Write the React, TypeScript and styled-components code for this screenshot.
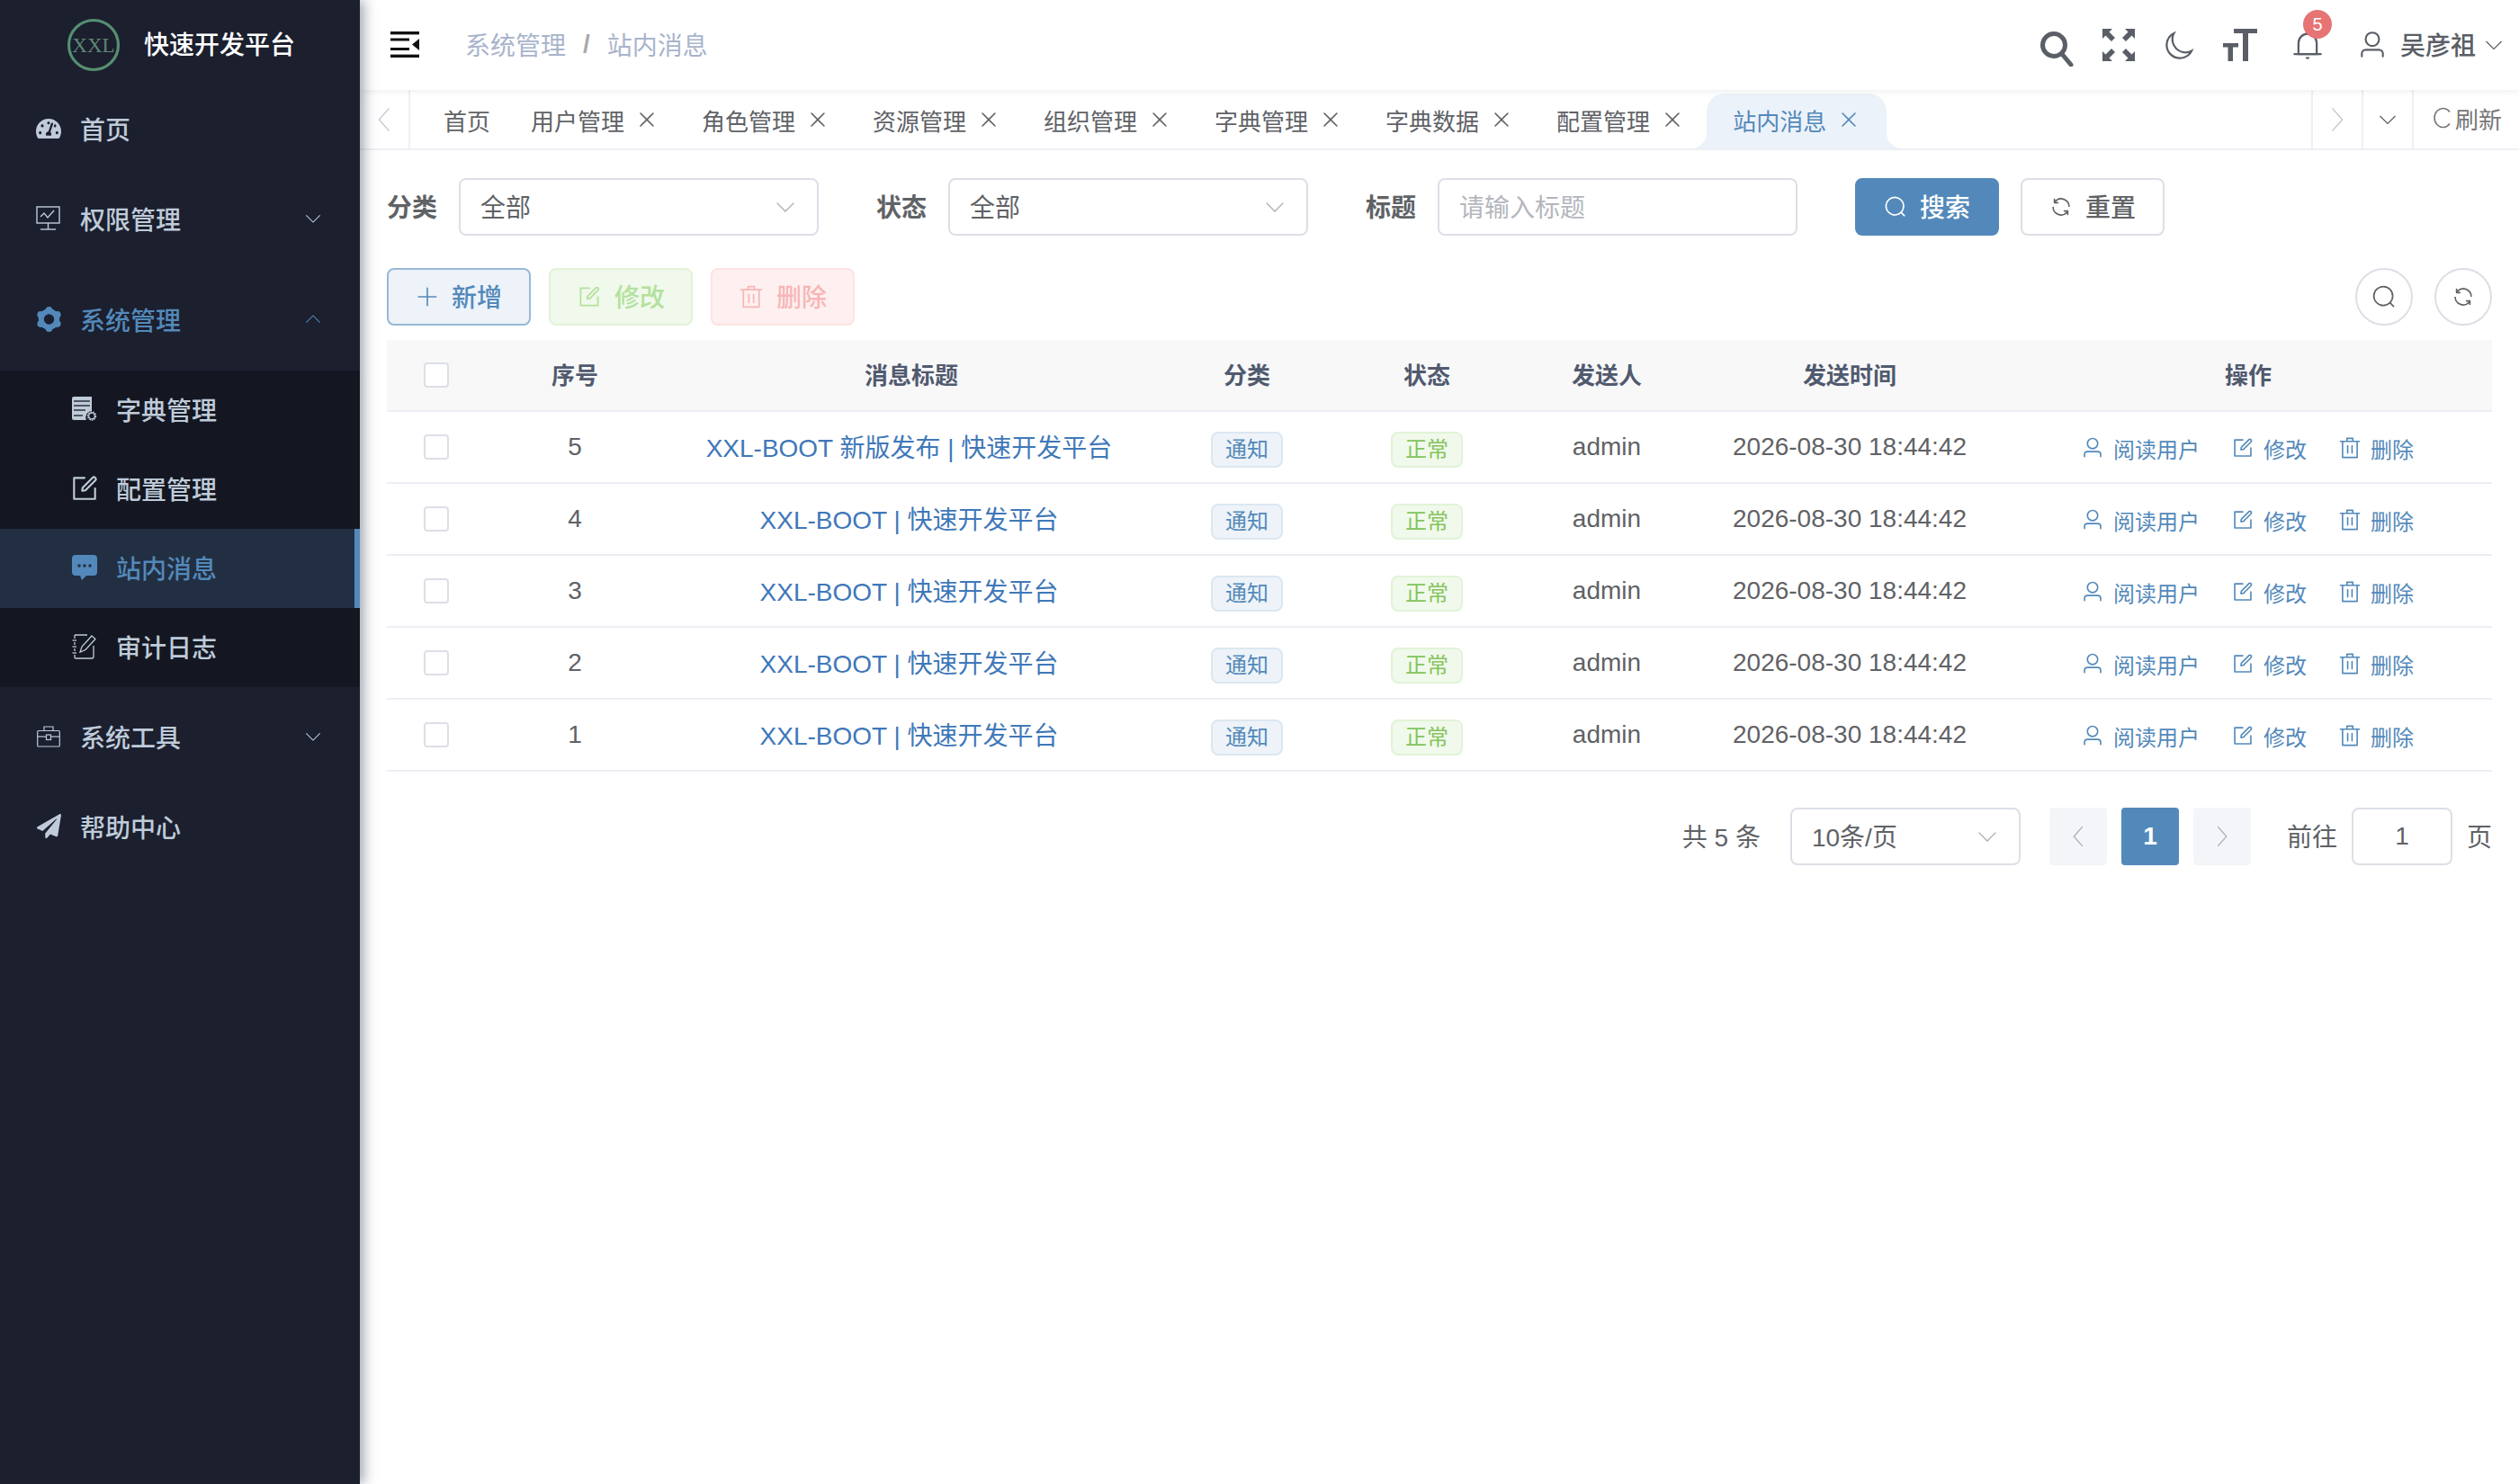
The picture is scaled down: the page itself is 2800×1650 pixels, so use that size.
import React from 'react';
import styled, {createGlobalStyle} from 'styled-components';
import {FaTachometerAlt, FaPaperPlane} from 'react-icons/fa';

const GlobalStyle = createGlobalStyle`
  html, body {
    margin: 0;
    padding: 0;
    background: #fff;
    font-family: "Liberation Sans", "Noto Sans CJK SC", sans-serif;
    color: #606266;
  }
  * { box-sizing: border-box; }
`;

const PRIMARY = '#5389ba';

/* ---------- icons ---------- */

const Ep = styled.svg.attrs({viewBox: '0 0 1024 1024', fill: 'currentColor'})<{$size: number}>`
  width: ${p => p.$size}px;
  height: ${p => p.$size}px;
  flex: none;
  display: block;
`;

type IconProps = {size: number};

const SearchIcon = ({size}: IconProps) => (
  <Ep $size={size}>
    <path d="m795.904 750.72 124.992 124.928a32 32 0 0 1-45.248 45.248L750.656 795.904a416 416 0 1 1 45.248-45.248zM480 832a352 352 0 1 0 0-704 352 352 0 0 0 0 704" />
  </Ep>
);
const RefreshIcon = ({size}: IconProps) => (
  <Ep $size={size}>
    <path d="M771.776 794.88A384 384 0 0 1 128 512h64a320 320 0 0 0 555.712 216.448H654.72a32 32 0 1 1 0-64h149.056a32 32 0 0 1 32 32v148.928a32 32 0 1 1-64 0v-50.56zM276.288 295.616h92.992a32 32 0 0 1 0 64H220.16a32 32 0 0 1-32-32V178.56a32 32 0 0 1 64 0v50.56A384 384 0 0 1 896.128 512h-64a320 320 0 0 0-555.776-216.384z" />
  </Ep>
);
const PlusIcon = ({size}: IconProps) => (
  <Ep $size={size}>
    <path d="M480 480V128a32 32 0 0 1 64 0v352h352a32 32 0 1 1 0 64H544v352a32 32 0 1 1-64 0V544H128a32 32 0 0 1 0-64z" />
  </Ep>
);
const EditIcon = ({size}: IconProps) => (
  <Ep $size={size}>
    <path d="M832 512a32 32 0 1 1 64 0v352a32 32 0 0 1-32 32H160a32 32 0 0 1-32-32V160a32 32 0 0 1 32-32h352a32 32 0 0 1 0 64H192v640h640z" />
    <path d="m469.952 554.24 52.8-7.552L847.104 222.4a32 32 0 1 0-45.248-45.248L477.44 501.44l-7.552 52.8zm422.4-422.4a96 96 0 0 1 0 135.808l-331.84 331.84a32 32 0 0 1-18.112 9.088L436.8 623.68a32 32 0 0 1-36.224-36.224l15.104-105.6a32 32 0 0 1 9.024-18.112l331.904-331.84a96 96 0 0 1 135.744 0z" />
  </Ep>
);
const DeleteIcon = ({size}: IconProps) => (
  <Ep $size={size}>
    <path d="M160 256H96a32 32 0 0 1 0-64h256V95.936a32 32 0 0 1 32-32h256a32 32 0 0 1 32 32V192h256a32 32 0 1 1 0 64h-64v672a32 32 0 0 1-32 32H192a32 32 0 0 1-32-32zm448-64v-64H416v64zM224 896h576V256H224zm192-128a32 32 0 0 1-32-32V416a32 32 0 0 1 64 0v320a32 32 0 0 1-32 32m192 0a32 32 0 0 1-32-32V416a32 32 0 0 1 64 0v320a32 32 0 0 1-32 32" />
  </Ep>
);
const UserIcon = ({size}: IconProps) => (
  <Ep $size={size}>
    <path d="M512 512a192 192 0 1 0 0-384 192 192 0 0 0 0 384m0 64a256 256 0 1 1 0-512 256 256 0 0 1 0 512m320 320v-96a96 96 0 0 0-96-96H288a96 96 0 0 0-96 96v96a32 32 0 1 1-64 0v-96a160 160 0 0 1 160-160h448a160 160 0 0 1 160 160v96a32 32 0 1 1-64 0" />
  </Ep>
);
const CloseIcon = ({size}: IconProps) => (
  <Ep $size={size}>
    <path d="M764.288 214.592 512 466.88 259.712 214.592a31.936 31.936 0 0 0-45.12 45.12L466.752 512 214.528 764.224a31.936 31.936 0 1 0 45.12 45.184L512 557.184l252.288 252.288a31.936 31.936 0 0 0 45.12-45.12L557.12 512.064l252.288-252.352a31.936 31.936 0 1 0-45.12-45.12z" />
  </Ep>
);
const MoonIcon = ({size}: IconProps) => (
  <Ep $size={size}>
    <path d="M240.448 240.448a384 384 0 1 0 559.424 525.696 448 448 0 0 1-542.016-542.08 390.592 390.592 0 0 0-17.408 16.384zm181.056 362.048a384 384 0 0 0 525.632 16.384A448 448 0 1 1 405.056 76.8a384 384 0 0 0 16.448 525.696" />
  </Ep>
);
const BellIcon = ({size}: IconProps) => (
  <Ep $size={size}>
    <path d="M512 64a64 64 0 0 1 64 64v64H448v-64a64 64 0 0 1 64-64" />
    <path d="M256 768h512V448a256 256 0 1 0-512 0zm256-640a320 320 0 0 1 320 320v384H192V448a320 320 0 0 1 320-320" />
    <path d="M96 768h832q32 0 32 32t-32 32H96q-32 0-32-32t32-32m352 128h128a64 64 0 0 1-128 0" />
  </Ep>
);

const Line = styled.svg.attrs({fill: 'none', stroke: 'currentColor'})<{$w: number; $h: number}>`
  width: ${p => p.$w}px;
  height: ${p => p.$h}px;
  flex: none;
  display: block;
`;

const ChevronDown = ({size}: IconProps) => (
  <Line $w={size} $h={size} viewBox="0 0 20 20" strokeWidth="1.2">
    <polyline points="1.5,6 10,14.5 18.5,6" />
  </Line>
);
const ChevronUp = ({size}: IconProps) => (
  <Line $w={size} $h={size} viewBox="0 0 20 20" strokeWidth="1.2">
    <polyline points="1.5,14 10,5.5 18.5,14" />
  </Line>
);
const ChevronLeft = ({size}: IconProps) => (
  <Line $w={size / 2} $h={size} viewBox="0 0 10 20" strokeWidth="1">
    <polyline points="9,1 1,10 9,19" />
  </Line>
);
const ChevronRight = ({size}: IconProps) => (
  <Line $w={size / 2} $h={size} viewBox="0 0 10 20" strokeWidth="1">
    <polyline points="1,1 9,10 1,19" />
  </Line>
);

const Hamburger = () => (
  <svg width="32" height="30" viewBox="0 0 32 30" fill="#111">
    <rect x="0" y="0" width="32" height="3.4" />
    <rect x="0" y="7.5" width="21" height="3" />
    <rect x="0" y="18" width="21" height="3" />
    <rect x="0" y="25.6" width="32" height="3.4" />
    <polygon points="32,8 24,14.5 32,21" />
  </svg>
);

const SearchGlyph = styled(Line)`
  margin-top: 8px;
  margin-right: 2px;
`;

const HeaderSearch = () => (
  <SearchGlyph $w={38} $h={40} viewBox="0 0 38 40" strokeWidth="5">
    <circle cx="16" cy="16" r="12.5" />
    <line x1="25" y1="26" x2="35" y2="38" strokeLinecap="round" />
  </SearchGlyph>
);

const FullGlyph = styled.svg`
  margin-right: 2px;
`;

const FullScreen = () => (
  <FullGlyph width="36" height="36" viewBox="0 0 36 36" fill="currentColor">
    <polygon points="0,0 11,0 7.5,3.5 14,10 10,14 3.5,7.5 0,11" />
    <polygon points="36,0 25,0 28.5,3.5 22,10 26,14 32.5,7.5 36,11" />
    <polygon points="0,36 11,36 7.5,32.5 14,26 10,22 3.5,28.5 0,25" />
    <polygon points="36,36 25,36 28.5,32.5 22,26 26,22 32.5,28.5 36,25" />
  </FullGlyph>
);

const FontSizeIcon = () => (
  <svg width="38" height="36" viewBox="0 0 38 36" fill="currentColor">
    <rect x="12" y="0" width="26" height="5" />
    <rect x="22" y="0" width="6" height="36" />
    <rect x="0" y="16" width="17" height="4.5" />
    <rect x="5.5" y="16" width="5.5" height="20" />
  </svg>
);

const Monitor = () => (
  <Line $w={28} $h={28} viewBox="0 0 28 28" strokeWidth="1.4">
    <rect x="1" y="1" width="25" height="18" />
    <polyline points="5,12 9,8 13,13 20,5" />
    <line x1="13.5" y1="19" x2="13.5" y2="26" />
    <line x1="5" y1="26" x2="22" y2="26" />
  </Line>
);

const GearIcon = () => (
  <svg width="29" height="28" viewBox="0 0 29 28" fill="currentColor">
    <circle cx="14.5" cy="14" r="8.7" fill="none" stroke="currentColor" strokeWidth="6" />
    <circle cx="14.5" cy="3.8" r="3.8" />
    <circle cx="14.5" cy="24.2" r="3.8" />
    <circle cx="5.200" cy="8.900" r="3.800" />
    <circle cx="23.800" cy="8.900" r="3.800" />
    <circle cx="5.200" cy="19.100" r="3.800" />
    <circle cx="23.800" cy="19.100" r="3.800" />
  </svg>
);

const DictIcon = () => (
  <svg width="28" height="28" viewBox="0 0 28 28">
    <path d="M2 0h20v16a7 7 0 0 0-6 10H2a2 2 0 0 1-2-2V2a2 2 0 0 1 2-2z" fill="currentColor" />
    <g stroke="#141722" strokeWidth="1.3">
      <line x1="2" y1="5" x2="20" y2="5" />
      <line x1="2" y1="10" x2="20" y2="10" />
      <line x1="2" y1="15" x2="15" y2="15" />
      <line x1="2" y1="21" x2="12" y2="21" />
    </g>
    <circle cx="22" cy="21.5" r="4" fill="none" stroke="currentColor" strokeWidth="2.4" strokeDasharray="1.6 0.8" />
    <circle cx="22" cy="21.5" r="3.4" fill="none" stroke="currentColor" strokeWidth="1" />
  </svg>
);

const ChatIcon = () => (
  <svg width="28" height="28" viewBox="0 0 28 28">
    <path d="M4 0h20a4 4 0 0 1 4 4v15a4 4 0 0 1-4 4h-8l-5 5-2-5H4a4 4 0 0 1-4-4V4a4 4 0 0 1 4-4z" fill="currentColor" />
    <g fill="#222f42">
      <circle cx="8" cy="12" r="1.8" />
      <circle cx="14" cy="12" r="1.8" />
      <circle cx="20" cy="12" r="1.8" />
    </g>
  </svg>
);

const AuditIcon = () => (
  <Line $w={28} $h={28} viewBox="0 0 28 28" strokeWidth="1.3">
    <path d="M3 1h14M24 13v12a2 2 0 0 1-2 2H4a1.500 1.500 0 0 1-1-1v-3M3 19v-3M3 12V9M3 5V1" />
    <line x1="0.500" y1="7" x2="5" y2="7" />
    <line x1="0.500" y1="14" x2="5" y2="14" />
    <line x1="0.500" y1="21" x2="5" y2="21" />
    <path d="M22 2l4 3.500-11 12-6 2.500 2-6z" />
  </Line>
);

const CaseIcon = () => (
  <Line $w={26} $h={24} viewBox="0 0 26 24" strokeWidth="1.2">
    <rect x="0.700" y="5.500" width="24.600" height="17.500" rx="1" />
    <path d="M8 5.500V1h10v4.500" />
    <line x1="0.700" y1="12" x2="10.500" y2="12" />
    <line x1="15.500" y1="12" x2="25.300" y2="12" />
    <rect x="10.500" y="10" width="5" height="5.500" />
  </Line>
);

const Logo = () => (
  <svg width="60" height="62" viewBox="0 0 60 62">
    <circle cx="30" cy="31" r="27.5" fill="none" stroke="#568f71" strokeWidth="3.200" />
    <text
      x="30"
      y="38.500"
      textAnchor="middle"
      fontFamily="'Liberation Serif', serif"
      fontSize="23"
      fill="#5f8573"
    >
      XXL
    </text>
  </svg>
);

/* ---------- layout ---------- */

const Shell = styled.div`
  display: flex;
  width: 2800px;
  height: 1650px;
  overflow: hidden;
`;

const Sidebar = styled.aside`
  width: 400px;
  flex: none;
  background: #1b1f2e;
  box-shadow: 4px 0 14px rgba(0, 21, 41, 0.4);
  position: relative;
  z-index: 3;
`;

const Brand = styled.div`
  height: 100px;
  display: flex;
  align-items: center;
  padding-left: 74px;
  gap: 26px;
  color: #fff;
  font-size: 28px;
  font-weight: 500;
  span {
    margin-bottom: 4px;
  }
`;

const MenuItem = styled.div<{$active?: boolean; $gapAfter?: number}>`
  height: 88px;
  display: flex;
  align-items: center;
  padding-left: 40px;
  padding-bottom: 3px;
  margin-bottom: ${p => p.$gapAfter ?? 12}px;
  font-size: 28px;
  font-weight: 500;
  color: ${p => (p.$active ? PRIMARY : '#bfcbd9')};
`;

const MenuIconBox = styled.span`
  width: 28px;
  height: 28px;
  flex: none;
  display: flex;
  align-items: center;
  justify-content: center;
  margin-right: 21px;
  svg {
    flex: none;
  }
`;

const MenuArrow = styled.span`
  margin-left: auto;
  margin-right: 43px;
  display: flex;
`;

const SubMenu = styled.div`
  background: #141722;
  margin-bottom: 12px;
`;

const SubItem = styled.div<{$active?: boolean}>`
  height: 88px;
  display: flex;
  align-items: center;
  padding-left: 80px;
  padding-bottom: 3px;
  font-size: 28px;
  font-weight: 500;
  color: ${p => (p.$active ? PRIMARY : '#bfcbd9')};
  background: ${p => (p.$active ? '#222f42' : 'transparent')};
  border-right: 6px solid ${p => (p.$active ? PRIMARY : 'transparent')};
`;

const Main = styled.main`
  flex: 1;
  min-width: 0;
  display: flex;
  flex-direction: column;
`;

const Header = styled.header`
  height: 100px;
  flex: none;
  display: flex;
  align-items: center;
  padding: 0 18px 0 34px;
  background: #fff;
  box-shadow: 0 1px 8px rgba(0, 21, 41, 0.08);
  position: relative;
  z-index: 2;
`;

const Breadcrumb = styled.div`
  margin-left: 51px;
  padding-bottom: 3px;
  display: flex;
  align-items: center;
  gap: 16px;
  font-size: 28px;
  color: #a8b4cb;
`;

const Slash = styled.span`
  color: #a9a9ad;
  font-weight: 700;
  padding: 0 3px;
`;

const Tools = styled.div`
  margin-left: auto;
  display: flex;
  align-items: center;
  gap: 30px;
  color: #5a5e66;
`;

const BellBox = styled.div`
  position: relative;
  margin-left: 8px;
  height: 36px;
  display: flex;
`;

const Badge = styled.span`
  position: absolute;
  left: 13px;
  top: -21px;
  width: 32px;
  height: 32px;
  border-radius: 50%;
  background: #e67474;
  color: #fff;
  font-size: 20px;
  display: flex;
  align-items: center;
  justify-content: center;
`;

const UserBox = styled.div`
  margin-left: 7px;
  display: flex;
  align-items: center;
  font-size: 28px;
  font-weight: 500;
  color: #5a5e66;
  gap: 14px;
`;

const UserName = styled.span`
  margin-bottom: 3px;
  margin-right: -4px;
`;

const TabBar = styled.div`
  height: 67px;
  flex: none;
  display: flex;
  align-items: stretch;
  border-bottom: 2px solid #edf0f5;
  background: #fff;
`;

const TabNav = styled.div<{$side?: 'left' | 'right'}>`
  width: 56px;
  flex: none;
  display: flex;
  align-items: center;
  justify-content: center;
  color: #c4c8d0;
  border-${p => (p.$side === 'left' ? 'right' : 'left')}: 2px solid #edf0f5;
`;

const TabDrop = styled(TabNav)`
  color: #5a5e66;
`;

const TabRefresh = styled.div`
  width: 119px;
  flex: none;
  display: flex;
  align-items: center;
  padding-left: 22px;
  padding-bottom: 3px;
  gap: 4px;
  font-size: 26px;
  color: #777;
  border-left: 2px solid #edf0f5;
`;

const TabList = styled.div`
  flex: 1;
  display: flex;
  align-items: flex-end;
  padding-left: 11px;
`;

const Tab = styled.div<{$active?: boolean; $fixed?: boolean}>`
  position: relative;
  height: 61px;
  padding: 0 ${p => (p.$fixed ? 19 : 22)}px 3px 26px;
  display: flex;
  align-items: center;
  gap: 12px;
  font-size: 26px;
  color: ${p => (p.$active ? PRIMARY : '#606266')};
  background: ${p => (p.$active ? '#ecf2f9' : 'transparent')};
  border-radius: ${p => (p.$active ? '20px 20px 0 0' : '0')};
  ${p =>
    p.$active &&
    `
    margin-left: 3px;
    padding: 0 29px 3px 29px;
    &::before, &::after {
      content: '';
      position: absolute;
      bottom: 0;
      width: 18px;
      height: 18px;
    }
    &::before {
      left: -18px;
      background: radial-gradient(circle at 0 0, transparent 18px, #ecf2f9 18.5px);
    }
    &::after {
      right: -18px;
      background: radial-gradient(circle at 100% 0, transparent 18px, #ecf2f9 18.5px);
    }
  `}
`;

const Page = styled.div`
  padding: 31px 30px 0;
`;

const FilterBar = styled.div`
  display: flex;
  align-items: center;
  gap: 64px;
`;

const Field = styled.label`
  display: flex;
  align-items: center;
  gap: 24px;
`;

const FieldLabel = styled.span`
  font-size: 28px;
  font-weight: 700;
  color: #606266;
  margin-bottom: 3px;
`;

const SelectBox = styled.div<{$width?: number}>`
  width: ${p => p.$width ?? 400}px;
  height: 64px;
  border: 2px solid #dcdfe6;
  border-radius: 8px;
  background: #fff;
  display: flex;
  align-items: center;
  justify-content: space-between;
  padding: 0 24px 0 22px;
  font-size: 28px;
  color: #606266;
  span {
    margin-bottom: 3px;
  }
  svg {
    color: #a8abb2;
  }
`;

const TextBox = styled(SelectBox)`
  color: #b4b6bd;
`;

const ButtonGroup = styled.div`
  display: flex;
  gap: 24px;
`;

type Tone = 'solid' | 'plain' | 'primary' | 'success' | 'danger';

const toneStyles: Record<Tone, string> = {
  solid: `background:${PRIMARY};border-color:${PRIMARY};color:#fff;`,
  plain: 'background:#fff;border-color:#dcdfe6;color:#606266;',
  primary: `background:#edf3f9;border-color:#98b8d6;color:${PRIMARY};`,
  success: 'background:#f0f9eb;border-color:#e1f3d8;color:#b3e19d;',
  danger: 'background:#fef0f0;border-color:#fde2e2;color:#f7b6b6;',
};

const Button = styled.div<{$tone: Tone}>`
  width: 160px;
  height: 64px;
  border: 2px solid;
  border-radius: 8px;
  display: flex;
  align-items: center;
  justify-content: center;
  gap: 14px;
  font-size: 28px;
  font-weight: 500;
  ${p => toneStyles[p.$tone]}
  span {
    margin-bottom: 3px;
  }
`;

const Toolbar = styled.div`
  margin-top: 36px;
  display: flex;
  align-items: center;
  justify-content: space-between;
`;

const Row = styled.div`
  display: flex;
  gap: 20px;
`;

const RoundGroup = styled.div`
  display: flex;
  gap: 24px;
`;

const RoundButton = styled.div`
  width: 64px;
  height: 64px;
  border-radius: 50%;
  border: 2px solid #dcdfe6;
  display: flex;
  align-items: center;
  justify-content: center;
  color: #606266;
`;

const COLUMNS = '110px 198px 550px 196px 204px 196px 344px 542px';

const Table = styled.div`
  margin-top: 16px;
  width: 2340px;
`;

const HeadRow = styled.div`
  display: grid;
  grid-template-columns: ${COLUMNS};
  height: 80px;
  background: #f8f8f9;
  border-bottom: 2px solid #ebeef5;
  font-size: 26px;
  font-weight: 700;
  color: #515a6e;
`;

const BodyRow = styled.div`
  display: grid;
  grid-template-columns: ${COLUMNS};
  height: 80px;
  border-bottom: 2px solid #ebeef5;
  font-size: 28px;
  color: #606266;
`;

const Cell = styled.div`
  display: flex;
  align-items: center;
  justify-content: center;
  white-space: nowrap;
`;

const HeadCell = styled(Cell)`
  padding-bottom: 3px;
`;

const Checkbox = styled.span`
  width: 28px;
  height: 28px;
  border: 2px solid #dcdfe6;
  border-radius: 4px;
  background: #fff;
`;

const TitleLink = styled.span`
  color: #3f78b9;
  margin: 0 5px 3px 0;
`;

const Tag = styled.span<{$tone: 'primary' | 'success'}>`
  height: 40px;
  margin-top: 6px;
  padding: 0 14px;
  border: 2px solid ${p => (p.$tone === 'primary' ? '#dce7f1' : '#e1f3d8')};
  border-radius: 8px;
  background: ${p => (p.$tone === 'primary' ? '#edf3f8' : '#f0f9eb')};
  color: ${p => (p.$tone === 'primary' ? PRIMARY : '#84c45c')};
  font-size: 24px;
  line-height: 36px;
`;

const ActionCell = styled(Cell)`
  justify-content: flex-start;
  padding-left: 85px;
  padding-top: 2px;
  gap: 35px;
`;

const Action = styled.span`
  display: flex;
  align-items: center;
  gap: 10px;
  font-size: 24px;
  color: ${PRIMARY};
`;

const Pager = styled.div`
  margin-top: 40px;
  width: 2340px;
  display: flex;
  justify-content: flex-end;
  align-items: center;
  font-size: 28px;
  color: #606266;
  > span {
    margin-bottom: 3px;
  }
`;

const PagerTotal = styled.span`
  margin-right: 33px;
  white-space: pre;
`;

const PagerBtns = styled.div`
  margin-left: 32px;
  margin-right: 40px;
  display: flex;
  gap: 16px;
`;

const PagerBtn = styled.div<{$active?: boolean}>`
  width: 64px;
  height: 64px;
  border-radius: 4px;
  display: flex;
  align-items: center;
  justify-content: center;
  background: ${p => (p.$active ? PRIMARY : '#f4f5f9')};
  color: ${p => (p.$active ? '#fff' : '#a8abb2')};
  font-weight: ${p => (p.$active ? 700 : 400)};
`;

const PagerInput = styled.div`
  width: 112px;
  height: 64px;
  margin: 0 16px;
  border: 2px solid #dcdfe6;
  border-radius: 8px;
  display: flex;
  align-items: center;
  justify-content: center;
`;

/* ---------- data ---------- */

const tabs = ['用户管理', '角色管理', '资源管理', '组织管理', '字典管理', '字典数据', '配置管理'];

const rows = [
  {id: 5, title: 'XXL-BOOT 新版发布 | 快速开发平台'},
  {id: 4, title: 'XXL-BOOT | 快速开发平台'},
  {id: 3, title: 'XXL-BOOT | 快速开发平台'},
  {id: 2, title: 'XXL-BOOT | 快速开发平台'},
  {id: 1, title: 'XXL-BOOT | 快速开发平台'},
];

const App = () => (
  <>
    <GlobalStyle />
    <Shell>
      <Sidebar>
        <Brand>
          <Logo />
          <span>快速开发平台</span>
        </Brand>
        <MenuItem>
          <MenuIconBox>
            <FaTachometerAlt size={28} />
          </MenuIconBox>
          首页
        </MenuItem>
        <MenuItem $gapAfter={24}>
          <MenuIconBox>
            <Monitor />
          </MenuIconBox>
          权限管理
          <MenuArrow>
            <ChevronDown size={18} />
          </MenuArrow>
        </MenuItem>
        <MenuItem $active>
          <MenuIconBox>
            <GearIcon />
          </MenuIconBox>
          系统管理
          <MenuArrow>
            <ChevronUp size={18} />
          </MenuArrow>
        </MenuItem>
        <SubMenu>
          <SubItem>
            <MenuIconBox>
              <DictIcon />
            </MenuIconBox>
            字典管理
          </SubItem>
          <SubItem>
            <MenuIconBox>
              <EditIcon size={34} />
            </MenuIconBox>
            配置管理
          </SubItem>
          <SubItem $active>
            <MenuIconBox>
              <ChatIcon />
            </MenuIconBox>
            站内消息
          </SubItem>
          <SubItem>
            <MenuIconBox>
              <AuditIcon />
            </MenuIconBox>
            审计日志
          </SubItem>
        </SubMenu>
        <MenuItem>
          <MenuIconBox>
            <CaseIcon />
          </MenuIconBox>
          系统工具
          <MenuArrow>
            <ChevronDown size={18} />
          </MenuArrow>
        </MenuItem>
        <MenuItem>
          <MenuIconBox>
            <FaPaperPlane size={27} />
          </MenuIconBox>
          帮助中心
        </MenuItem>
      </Sidebar>

      <Main>
        <Header>
          <Hamburger />
          <Breadcrumb>
            <span>系统管理</span>
            <Slash>/</Slash>
            <span>站内消息</span>
          </Breadcrumb>
          <Tools>
            <HeaderSearch />
            <FullScreen />
            <MoonIcon size={36} />
            <FontSizeIcon />
            <BellBox>
              <BellIcon size={36} />
              <Badge>5</Badge>
            </BellBox>
            <UserBox>
              <UserIcon size={34} />
              <UserName>吴彦祖</UserName>
              <ChevronDown size={20} />
            </UserBox>
          </Tools>
        </Header>

        <TabBar>
          <TabNav $side="left">
            <ChevronLeft size={28} />
          </TabNav>
          <TabList>
            <Tab $fixed>首页</Tab>
            {tabs.map(name => (
              <Tab key={name}>
                {name}
                <CloseIcon size={26} />
              </Tab>
            ))}
            <Tab $active>
              站内消息
              <CloseIcon size={26} />
            </Tab>
          </TabList>
          <TabNav $side="right">
            <ChevronRight size={28} />
          </TabNav>
          <TabDrop $side="right">
            <ChevronDown size={20} />
          </TabDrop>
          <TabRefresh>
            <Line $w={20} $h={24} viewBox="0 0 20 24" strokeWidth="1.6">
              <path d="M18 5.500A9.500 10.500 0 1 0 18 18.500" />
            </Line>
            刷新
          </TabRefresh>
        </TabBar>

        <Page>
          <FilterBar>
            <Field>
              <FieldLabel>分类</FieldLabel>
              <SelectBox>
                <span>全部</span>
                <ChevronDown size={22} />
              </SelectBox>
            </Field>
            <Field>
              <FieldLabel>状态</FieldLabel>
              <SelectBox>
                <span>全部</span>
                <ChevronDown size={22} />
              </SelectBox>
            </Field>
            <Field>
              <FieldLabel>标题</FieldLabel>
              <TextBox>
                <span>请输入标题</span>
              </TextBox>
            </Field>
            <ButtonGroup>
              <Button $tone="solid">
                <SearchIcon size={26} />
                <span>搜索</span>
              </Button>
              <Button $tone="plain">
                <RefreshIcon size={26} />
                <span>重置</span>
              </Button>
            </ButtonGroup>
          </FilterBar>

          <Toolbar>
            <Row>
              <Button $tone="primary">
                <PlusIcon size={26} />
                <span>新增</span>
              </Button>
              <Button $tone="success">
                <EditIcon size={28} />
                <span>修改</span>
              </Button>
              <Button $tone="danger">
                <DeleteIcon size={28} />
                <span>删除</span>
              </Button>
            </Row>
            <RoundGroup>
              <RoundButton>
                <SearchIcon size={28} />
              </RoundButton>
              <RoundButton>
                <RefreshIcon size={26} />
              </RoundButton>
            </RoundGroup>
          </Toolbar>

          <Table>
            <HeadRow>
              <Cell>
                <Checkbox />
              </Cell>
              <HeadCell>序号</HeadCell>
              <HeadCell>消息标题</HeadCell>
              <HeadCell>分类</HeadCell>
              <HeadCell>状态</HeadCell>
              <HeadCell>发送人</HeadCell>
              <HeadCell>发送时间</HeadCell>
              <HeadCell>操作</HeadCell>
            </HeadRow>
            {rows.map(row => (
              <BodyRow key={row.id}>
                <Cell>
                  <Checkbox />
                </Cell>
                <Cell>{row.id}</Cell>
                <Cell>
                  <TitleLink>{row.title}</TitleLink>
                </Cell>
                <Cell>
                  <Tag $tone="primary">通知</Tag>
                </Cell>
                <Cell>
                  <Tag $tone="success">正常</Tag>
                </Cell>
                <Cell>admin</Cell>
                <Cell>2026-08-30 18:44:42</Cell>
                <ActionCell>
                  <Action>
                    <UserIcon size={26} />
                    阅读用户
                  </Action>
                  <Action>
                    <EditIcon size={26} />
                    修改
                  </Action>
                  <Action>
                    <DeleteIcon size={26} />
                    删除
                  </Action>
                </ActionCell>
              </BodyRow>
            ))}
          </Table>

          <Pager>
            <PagerTotal>共 5 条</PagerTotal>
            <SelectBox $width={256}>
              <span>10条/页</span>
              <ChevronDown size={22} />
            </SelectBox>
            <PagerBtns>
              <PagerBtn>
                <ChevronLeft size={24} />
              </PagerBtn>
              <PagerBtn $active>1</PagerBtn>
              <PagerBtn>
                <ChevronRight size={24} />
              </PagerBtn>
            </PagerBtns>
            <span>前往</span>
            <PagerInput>1</PagerInput>
            <span>页</span>
          </Pager>
        </Page>
      </Main>
    </Shell>
  </>
);

export default App;
